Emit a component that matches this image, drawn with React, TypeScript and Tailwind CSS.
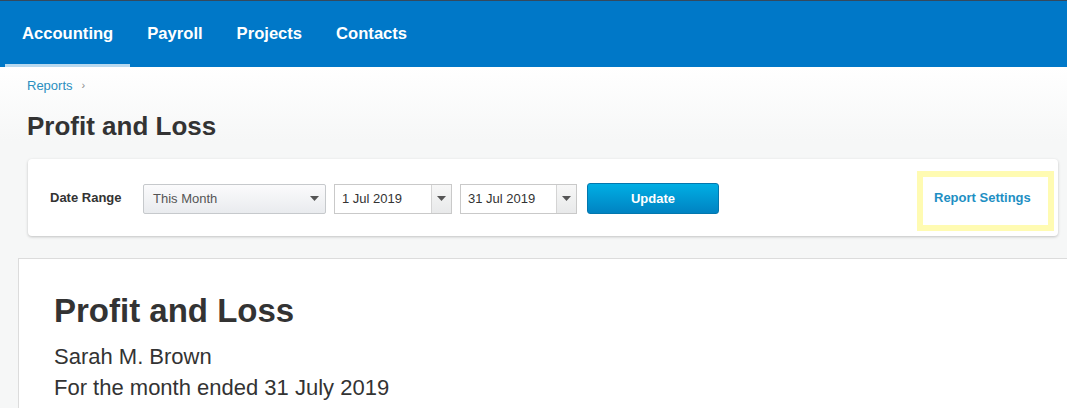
import { type ReactNode } from "react";

const NAV = ["Accounting", "Payroll", "Projects", "Contacts"];

function Caret() {
  return (
    <svg width="9" height="5" viewBox="0 0 9 5" className="block">
      <path d="M0 0h9L4.5 5z" fill="#555" />
    </svg>
  );
}

function DateBox({ value, width }: { value: string; width: string }) {
  return (
    <div className={`flex h-[30px] ${width} border border-[#c9c9c9] bg-white`}>
      <div className="flex flex-1 items-center pl-[7px] text-[13px] text-[#333]">{value}</div>
      <div className="flex w-[20px] items-center justify-center border-l border-[#d4d4d4] bg-gradient-to-b from-[#f7f7f7] to-[#e8e9ea]">
        <Caret />
      </div>
    </div>
  );
}

function Card({ children }: { children: ReactNode }) {
  return (
    <div className="ml-[28px] mr-[9px] mt-[18px] flex h-[77px] items-center rounded-[4px] bg-white pl-[22px] pr-[4px] shadow-[0_1px_3px_rgba(0,0,0,0.22)]">
      {children}
    </div>
  );
}

export default function App() {
  return (
    <div className="h-[408px] w-full overflow-hidden bg-[#f6f7f7] font-['Liberation_Sans',Arial,sans-serif]">
      <div className="h-px bg-[#34495e]" />
      <nav className="flex h-[66px] bg-[#0078c8] pl-[5px]">
        {NAV.map((n, i) => (
          <div
            key={n}
            className={`flex h-full items-center px-[17px] text-[16.6px] font-bold text-white ${
              i === 0 ? "border-b-[3px] border-[#b9d9ef] pt-[3px]" : ""
            }`}
          >
            {n}
          </div>
        ))}
      </nav>

      <div className="bg-gradient-to-b from-white to-[#f6f7f7] pt-[11px]">
        <div className="flex items-center gap-[9px] pl-[27px] text-[13px] leading-[15px]">
          <span className="text-[#2b8fc0]">Reports</span>
          <span className="text-[11px] text-[#888]">›</span>
        </div>
        <h1 className="mt-[18px] pl-[27px] text-[26px] font-bold leading-[30px] text-[#333]">Profit and Loss</h1>
      </div>

      <Card>
        <div className="w-[93px] pt-[1px] text-[13px] font-bold text-[#333]">Date Range</div>
        <div className="mt-[2px] flex h-[30px] w-[183px] items-center justify-between rounded-[2px] border border-[#c6c9cc] bg-gradient-to-b from-[#fbfbfc] to-[#e9ebee] pl-[9px] pr-[6px] text-[13px] text-[#555]">
          <span>This Month</span>
          <Caret />
        </div>
        <div className="ml-[8px] mt-[2px]">
          <DateBox value="1 Jul 2019" width="w-[118px]" />
        </div>
        <div className="ml-[8px] mt-[2px]">
          <DateBox value="31 Jul 2019" width="w-[117px]" />
        </div>
        <button className="ml-[10px] mt-[2px] h-[31px] w-[132px] rounded-[3px] border border-[#0277ae] bg-gradient-to-b from-[#00aee4] to-[#0083c2] text-[13px] font-bold text-white">
          Update
        </button>
        <div className="ml-auto mt-[7px] flex h-[60px] w-[137px] items-center border-[6px] border-[#fffbb2] pb-[6px] pl-[11px] text-[13px] font-bold text-[#1e8fc3]">
          Report Settings
        </div>
      </Card>

      <div className="ml-[18px] mt-[22px] h-[200px] border-l border-t border-[#dcdcdc] bg-white pl-[35px] pt-[33px] text-[#333]">
        <h2 className="text-[33px] font-bold leading-[38px]">Profit and Loss</h2>
        <div className="mt-[14px] text-[22px] leading-[26px]">Sarah M. Brown</div>
        <div className="mt-[5px] text-[22px] leading-[26px]">For the month ended 31 July 2019</div>
      </div>
    </div>
  );
}
